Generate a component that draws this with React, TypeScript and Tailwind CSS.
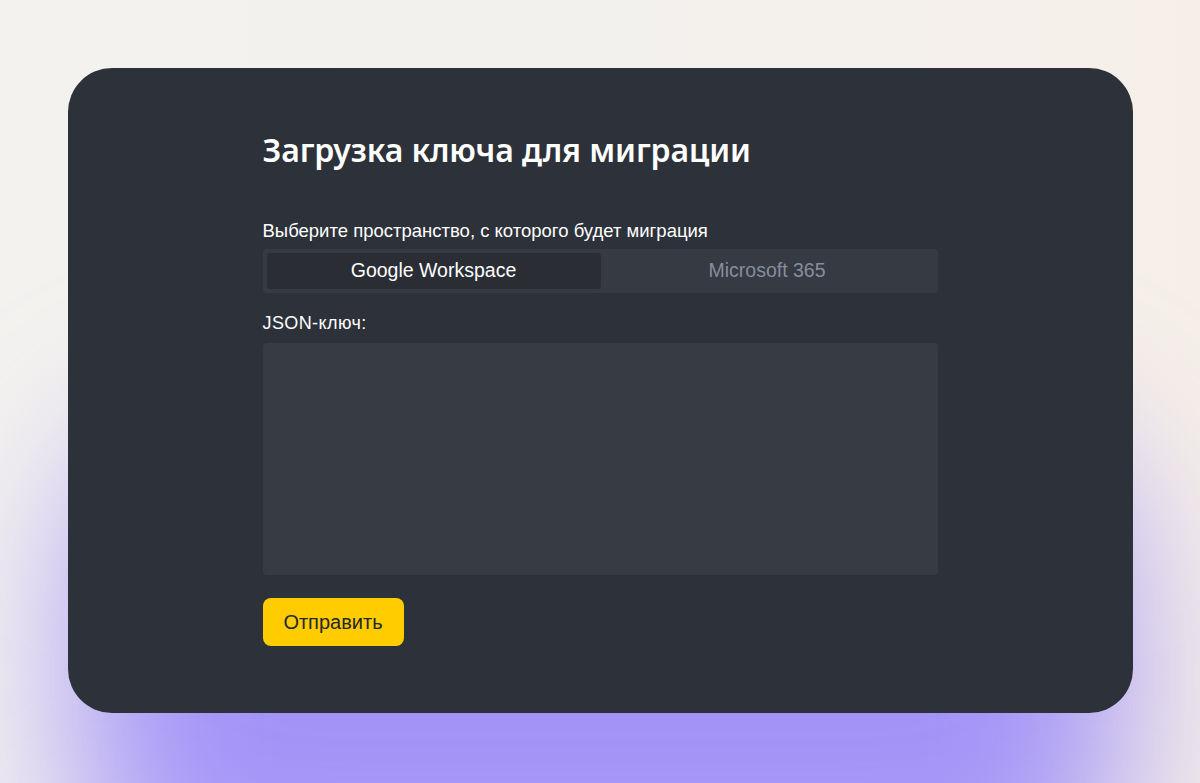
export default function App() {
    return (
        <div className="relative w-[1200px] h-[783px] overflow-hidden bg-[linear-gradient(90deg,#f4f2ef_0%,#f3f1ee_50%,#f5efe8_100%)]">
            <div className="absolute left-[80px] right-[80px] top-[430px] bottom-[-140px] rounded-[140px] bg-[#a393f7] blur-[80px]" />
            <div className="relative flex justify-center pt-[68px]">
                <div className="w-[1065px] h-[645px] rounded-[44px] bg-[#2d3139] pt-[62px] flex justify-center">
                    <div className="w-[675px] flex flex-col">
                        <h1 className="text-[32px] leading-[40px] font-semibold text-white tracking-[-0.1px] font-['Noto_Sans',sans-serif]">
                            Загрузка ключа для миграции
                        </h1>
                        <div className="mt-[50px] text-[18.5px] leading-[22px] text-white font-['Liberation_Sans',Arial,sans-serif]">
                            Выберите пространство, с которого будет миграция
                        </div>
                        <div className="mt-[7px] h-[44px] bg-[#363a43] rounded-[4px] p-[4px] flex font-['Liberation_Sans',Arial,sans-serif] text-[19.5px]">
                            <button className="w-[334px] rounded-[4px] bg-[#2a2d34] text-white">Google Workspace</button>
                            <button className="flex-1 text-[#878d9c]">Microsoft 365</button>
                        </div>
                        <div className="mt-[19px] text-[18px] leading-[22px] text-white font-['Liberation_Sans',Arial,sans-serif] tracking-[0.4px]">
                            JSON-ключ:
                        </div>
                        <textarea className="mt-[9px] h-[232px] bg-[#373b44] rounded-[4px] resize-none outline-none" />
                        <div className="mt-[23px]">
                            <button className="w-[141px] h-[48px] rounded-[8px] bg-[#ffcc00] text-[#23262d] text-[20px] font-['Liberation_Sans',Arial,sans-serif]">
                                Отправить
                            </button>
                        </div>
                    </div>
                </div>
            </div>
        </div>
    );
}
